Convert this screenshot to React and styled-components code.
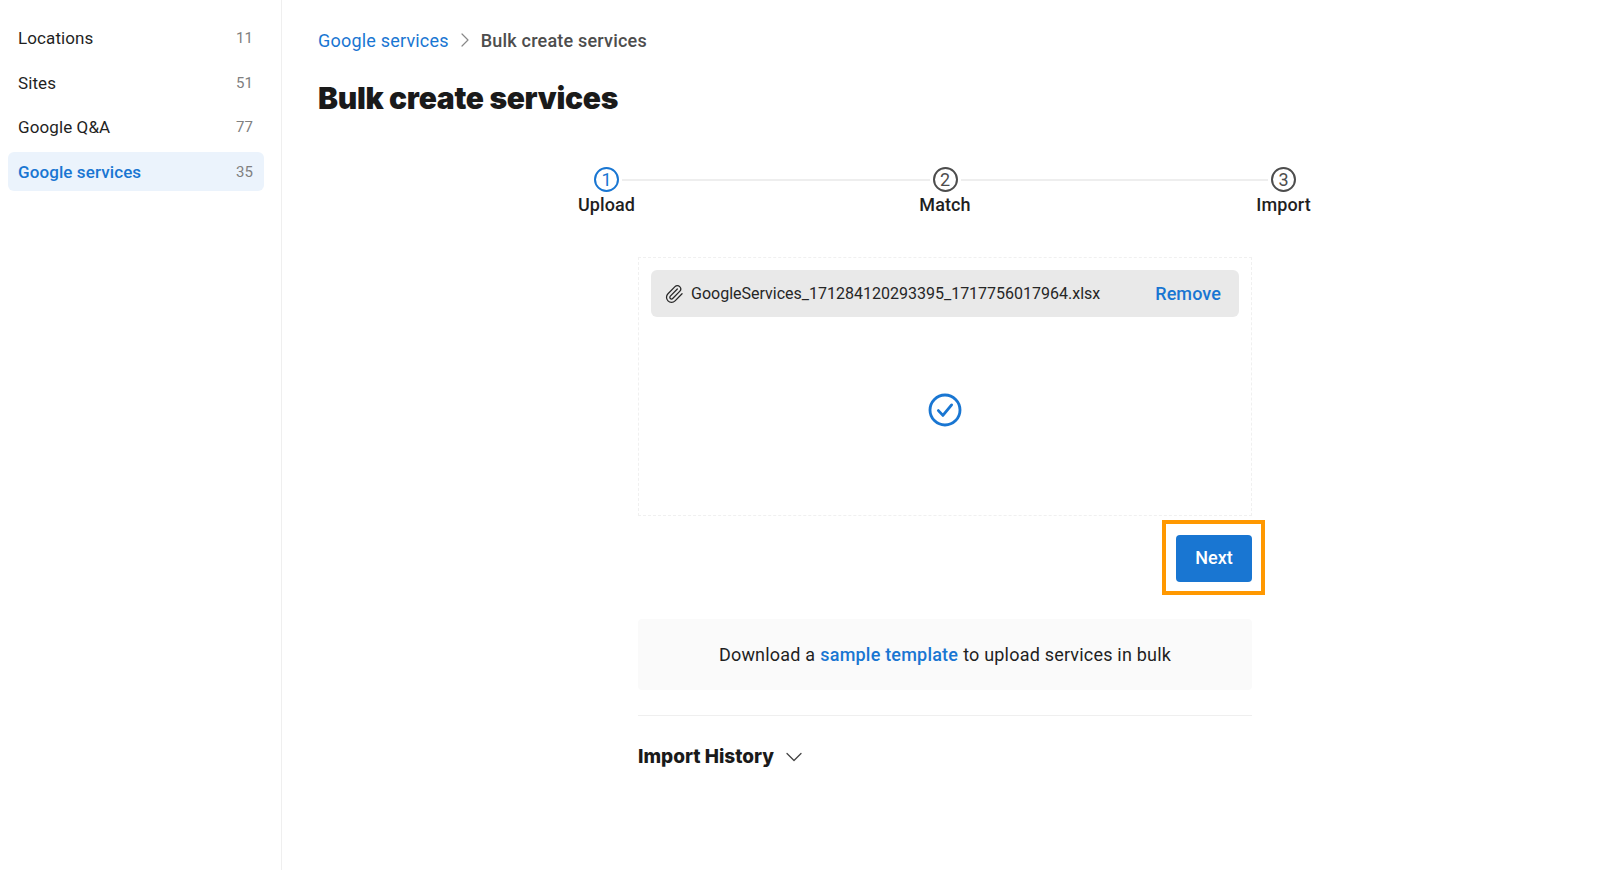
import React from 'react';
import styled, { createGlobalStyle } from 'styled-components';
import { ChevronDown, ChevronRight, Paperclip } from 'lucide-react';

const BLUE = '#1976d2';
const TEXT = '#1f1f1f';

const GlobalStyle = createGlobalStyle`
  html, body {
    margin: 0;
    height: 100%;
    background: #fff;
  }
  body {
    font-family: Roboto, 'Liberation Sans', sans-serif;
    color: ${TEXT};
  }
`;

const Page = styled.div`
  display: flex;
  height: 870px;
  overflow: hidden;
`;

const Sidebar = styled.nav`
  width: 282px;
  flex-shrink: 0;
  box-sizing: border-box;
  padding: 18.5px 17px 0 8px;
  border-right: 1px solid #efefef;
  display: flex;
  flex-direction: column;
  gap: 5.6px;
`;

const NavItem = styled.div`
  height: 39px;
  box-sizing: border-box;
  padding: 0 11px 0 10px;
  display: flex;
  align-items: center;
  justify-content: space-between;
  border-radius: 6px;
  font-size: 17px;
  letter-spacing: 0.1px;
  font-weight: ${(props) => (props.$active ? 500 : 400)};
  color: ${(props) => (props.$active ? BLUE : TEXT)};
  background: ${(props) => (props.$active ? '#ebf3fc' : 'transparent')};
`;

const NavCount = styled.span`
  font-size: 15px;
  font-weight: 400;
  color: #808080;
`;

const Main = styled.main`
  flex: 1;
  padding: 28px 0 0 36px;
`;

const Breadcrumb = styled.div`
  display: flex;
  align-items: center;
  height: 24px;
  font-size: 18px;
  letter-spacing: 0.2px;
  gap: 4px;
`;

const Crumb = styled.span`
  color: ${(props) => (props.$link ? BLUE : '#4d4d4d')};
  font-weight: ${(props) => (props.$link ? 400 : 500)};
`;

const Title = styled.h1`
  margin: 24px 0 0;
  font-family: Inter, sans-serif;
  font-size: 30px;
  line-height: 44px;
  font-weight: 900;
  letter-spacing: -0.3px;
  color: #1a1a1a;
`;

const Content = styled.div`
  width: 702px;
  margin: 47px 0 0 276px;
  display: flex;
  flex-direction: column;
  align-items: center;
`;

const Stepper = styled.div`
  width: 100%;
  display: flex;
  align-items: flex-start;
`;

const Step = styled.div`
  width: 25px;
  display: flex;
  flex-direction: column;
  align-items: center;
  flex-shrink: 0;
`;

const StepCircle = styled.div`
  width: 25px;
  height: 25px;
  box-sizing: border-box;
  border-radius: 50%;
  border: 2px solid ${(props) => (props.$active ? BLUE : '#4d4d4d')};
  color: ${(props) => (props.$active ? BLUE : '#4d4d4d')};
  display: flex;
  align-items: center;
  justify-content: center;
  font-size: 18px;
`;

const StepLabel = styled.div`
  margin-top: 1px;
  font-size: 18px;
  line-height: 24px;
  font-weight: 500;
  letter-spacing: 0.1px;
  white-space: nowrap;
`;

const StepLine = styled.div`
  flex: 1;
  height: 2px;
  margin: 12px 3px 0;
  background: #eeeeee;
`;

const DropZone = styled.div`
  width: 614px;
  height: 259px;
  margin-top: 40px;
  box-sizing: border-box;
  padding: 12px;
  border: 1px dashed #f0f0f0;
  display: flex;
  flex-direction: column;
`;

const FileRow = styled.div`
  height: 47px;
  padding: 0 18px 0 13px;
  display: flex;
  align-items: center;
  background: #e9e9e9;
  border-radius: 6px;
`;

const FileName = styled.span`
  flex: 1;
  margin-left: 7px;
  font-size: 16px;
  color: #262626;
`;

const RemoveLink = styled.span`
  font-size: 18px;
  font-weight: 500;
  letter-spacing: 0.1px;
  color: ${BLUE};
`;

const Clip = styled(Paperclip)`
  width: 20px;
  height: 20px;
  color: #262626;
  stroke-width: 1.5;
`;

const DoneArea = styled.div`
  flex: 1;
  display: flex;
  align-items: center;
  justify-content: center;
  color: ${BLUE};
`;

const ActionRow = styled.div`
  width: 614px;
  margin-top: 19px;
  display: flex;
  justify-content: flex-end;
`;

const NextButton = styled.button`
  position: relative;
  width: 76px;
  height: 47px;
  padding: 0 0 2px;
  border: 0;
  border-radius: 4px;
  background: ${BLUE};
  color: #fff;
  font-family: inherit;
  font-size: 18px;
  font-weight: 500;
`;

const Highlight = styled.span`
  position: absolute;
  inset: -15px -13px -13px -14px;
  border: 4px solid #ff9800;
`;

const TemplateBox = styled.div`
  width: 614px;
  height: 71px;
  margin-top: 37px;
  padding-bottom: 1px;
  box-sizing: border-box;
  display: flex;
  align-items: center;
  justify-content: center;
  background: #fafafa;
  border-radius: 4px;
  font-size: 18px;
  letter-spacing: 0.2px;
  color: ${TEXT};
`;

const TemplateLink = styled.span`
  margin: 0 5px;
  font-weight: 500;
  color: ${BLUE};
`;

const HistoryHeader = styled.div`
  width: 614px;
  margin-top: 25px;
  padding-top: 27px;
  border-top: 1px solid #efefef;
  display: flex;
  align-items: center;
  gap: 6px;
`;

const HistoryTitle = styled.span`
  font-family: Inter, sans-serif;
  font-size: 19px;
  line-height: 28px;
  font-weight: 800;
  color: #1a1a1a;
`;

const steps = ['Upload', 'Match', 'Import'];

const navItems = [
  { label: 'Locations', count: 11 },
  { label: 'Sites', count: 51 },
  { label: 'Google Q&A', count: 77 },
  { label: 'Google services', count: 35, active: true },
];

function CheckBadge() {
  return (
    <svg width="36" height="36" viewBox="0 0 24 24" fill="none" stroke="currentColor" strokeWidth="1.9" strokeLinecap="round" strokeLinejoin="round">
      <circle cx="12" cy="12" r="10" />
      <path d="M7.6 12.4l3 3.2 5.8-7" />
    </svg>
  );
}

export default function App() {
  return (
    <Page>
      <GlobalStyle />
      <Sidebar>
        {navItems.map((item) => (
          <NavItem key={item.label} $active={item.active}>
            {item.label}
            <NavCount>{item.count}</NavCount>
          </NavItem>
        ))}
      </Sidebar>
      <Main>
        <Breadcrumb>
          <Crumb $link>Google services</Crumb>
          <ChevronRight size={24} color="#888" strokeWidth={1.2} />
          <Crumb>Bulk create services</Crumb>
        </Breadcrumb>
        <Title>Bulk create services</Title>
        <Content>
          <Stepper>
            {steps.map((step, i) => (
              <React.Fragment key={step}>
                {i > 0 && <StepLine />}
                <Step>
                  <StepCircle $active={i === 0}>{i + 1}</StepCircle>
                  <StepLabel>{step}</StepLabel>
                </Step>
              </React.Fragment>
            ))}
          </Stepper>
          <DropZone>
            <FileRow>
              <Clip />
              <FileName>GoogleServices_171284120293395_1717756017964.xlsx</FileName>
              <RemoveLink>Remove</RemoveLink>
            </FileRow>
            <DoneArea>
              <CheckBadge />
            </DoneArea>
          </DropZone>
          <ActionRow>
            <NextButton>
              Next
              <Highlight />
            </NextButton>
          </ActionRow>
          <TemplateBox>
            Download a<TemplateLink>sample template</TemplateLink>to upload services in bulk
          </TemplateBox>
          <HistoryHeader>
            <HistoryTitle>Import History</HistoryTitle>
            <ChevronDown size={28} color="#444" strokeWidth={1.1} />
          </HistoryHeader>
        </Content>
      </Main>
    </Page>
  );
}
